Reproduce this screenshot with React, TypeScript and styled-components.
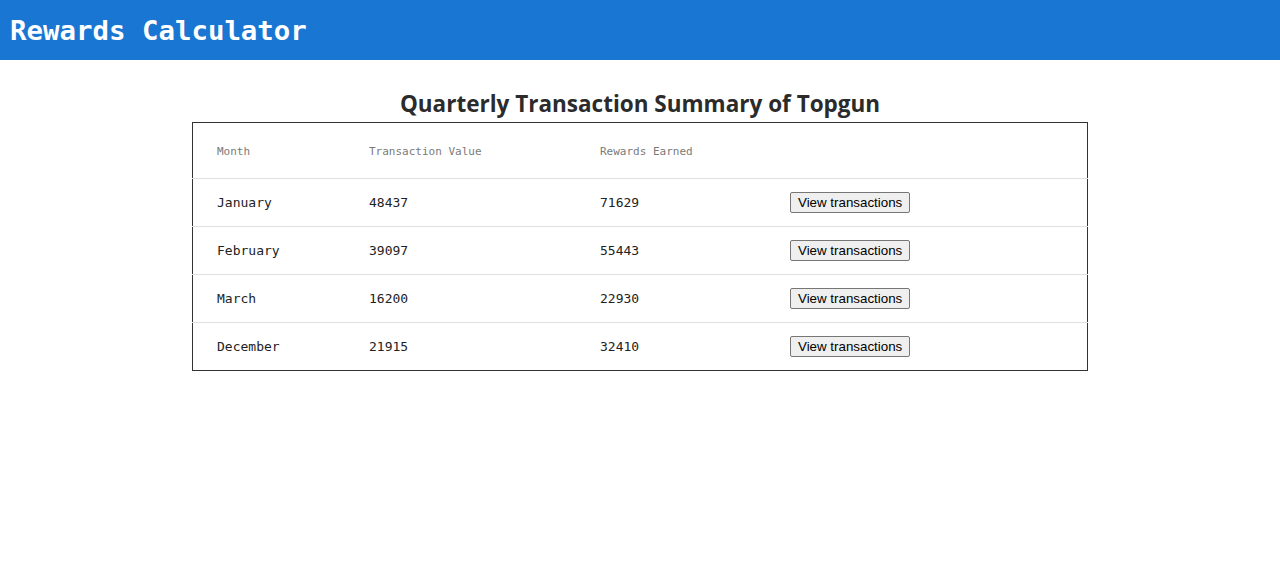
import React from "react";
import styled, { createGlobalStyle } from "styled-components";

const Global = createGlobalStyle`
  html, body { margin: 0; padding: 0; background: #fff; }
  body { font-family: "DejaVu Sans Mono", monospace; }
`;

const Header = styled.header`
  height: 60px;
  background: #1976d2;
  display: flex;
  align-items: center;
  padding: 0 10px;
`;

const AppTitle = styled.h1`
  margin: 0;
  color: #fff;
  font-family: "DejaVu Sans Mono", monospace;
  font-weight: bold;
  font-size: 27.4px;
`;

const Main = styled.main`
  display: flex;
  flex-direction: column;
  align-items: center;
  padding-top: 29px;
`;

const Title = styled.h2`
  margin: 0 0 3px;
  font-family: "Open Sans", "Noto Sans", sans-serif;
  font-weight: bold;
  font-size: 22.5px;
  line-height: 30px;
  color: #2b2b2b;
`;

const Table = styled.table`
  width: 896px;
  border: 1px solid #333;
  border-collapse: collapse;
  table-layout: fixed;
`;

const Th = styled.th<{ $w?: number }>`
  width: ${(p) => (p.$w ? `${p.$w}px` : "auto")};
  height: 53px;
  padding: 2px 0 0 24px;
  text-align: left;
  font-weight: normal;
  font-size: 11px;
  color: #7a7a7a;
  border-bottom: 1px solid #e0e0e0;
  font-family: "DejaVu Sans Mono", monospace;
`;

const Row = styled.tr<{ $last?: boolean }>`
  height: 48px;
  border-bottom: ${(p) => (p.$last ? "none" : "1px solid #e0e0e0")};
`;

const Td = styled.td`
  padding: 0 0 0 24px;
  font-size: 13px;
  color: #222;
  font-family: "DejaVu Sans Mono", monospace;
`;

const Button = styled.button`
  font-family: "Liberation Sans", Arial, sans-serif;
  font-size: 13.33px;
  padding: 1px 7px;
  height: 21px;
  border: 1px solid #767676;
  border-radius: 2px;
  background: #efefef;
  color: #000;
`;

const data = [
  ["January", "48437", "71629"],
  ["February", "39097", "55443"],
  ["March", "16200", "22930"],
  ["December", "21915", "32410"],
];

export default function App() {
  return (
    <>
      <Global />
      <Header>
        <AppTitle>Rewards Calculator</AppTitle>
      </Header>
      <Main>
        <Title>Quarterly Transaction Summary of Topgun</Title>
        <Table>
          <thead>
            <tr>
              <Th $w={128}>Month</Th>
              <Th $w={207}>Transaction Value</Th>
              <Th $w={166}>Rewards Earned</Th>
              <Th />
            </tr>
          </thead>
          <tbody>
            {data.map((r, i) => (
              <Row key={r[0]} $last={i === data.length - 1}>
                <Td>{r[0]}</Td>
                <Td>{r[1]}</Td>
                <Td>{r[2]}</Td>
                <Td>
                  <Button>View transactions</Button>
                </Td>
              </Row>
            ))}
          </tbody>
        </Table>
      </Main>
    </>
  );
}
